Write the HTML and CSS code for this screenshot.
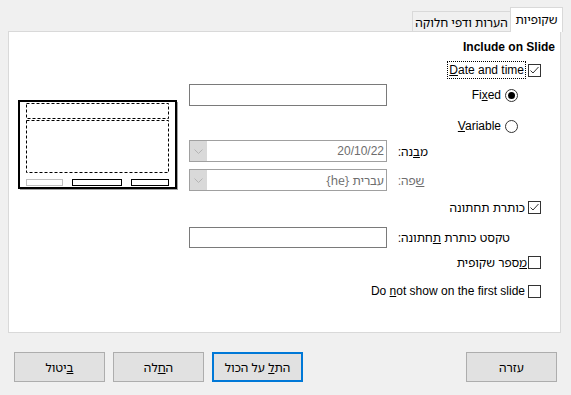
FILE: index.html
```html
<!DOCTYPE html>
<html lang="he">
<head>
    <meta charset="UTF-8">
    <title>Header and Footer</title>
    <link rel="stylesheet" href="styles.css">
</head>
<body>
    <div class="dialog">
        <div class="tabs">
            <div class="tab he" dir="rtl">הערות ודפי חלוקה</div>
            <div class="tab active he" dir="rtl">שקופיות</div>
        </div>

        <div class="panel">
            <div class="preview">
                <svg width="160" height="90" viewBox="0 0 160 90">
                    <rect x="2" y="2" width="158" height="88" fill="#a0a0a0"/>
                    <rect x="1" y="1" width="157" height="87" fill="#fff" stroke="#000" stroke-width="2"/>
                    <rect x="8.5" y="3.5" width="142" height="15" fill="none" stroke="#000" stroke-dasharray="3 2"/>
                    <rect x="8.5" y="20.5" width="142" height="52" fill="none" stroke="#000" stroke-dasharray="3 2"/>
                    <rect x="8.5" y="79.5" width="36" height="6" fill="none" stroke="#c0c0c0"/>
                    <rect x="54.5" y="79.5" width="49" height="6" fill="none" stroke="#000"/>
                    <rect x="113.5" y="79.5" width="37" height="6" fill="none" stroke="#000"/>
                </svg>
            </div>

            <div class="form">
                <div class="row r-include">
                    <div class="ctl"></div>
                    <div class="lbl end"><b>Include on Slide</b></div>
                </div>
                <div class="row r-date">
                    <div class="ctl"></div>
                    <div class="lbl check">
                        <span class="focus"><u>D</u>ate and time</span>
                        <span class="box checked"><svg width="11" height="11" viewBox="0 0 11 11"><path d="M1.5 5.5 L4 8 L9.5 2" fill="none" stroke="#333" stroke-width="1"/></svg></span>
                    </div>
                </div>
                <div class="row r-fixed">
                    <div class="ctl"><div class="input"></div></div>
                    <div class="lbl radio-row">
                        <span>Fi<u>x</u>ed</span>
                        <span class="radio on"></span>
                    </div>
                </div>
                <div class="row r-variable">
                    <div class="ctl"></div>
                    <div class="lbl radio-row">
                        <span><u>V</u>ariable</span>
                        <span class="radio"></span>
                    </div>
                </div>
                <div class="row r-combo1">
                    <div class="ctl">
                        <div class="combo">
                            <span class="drop"><svg width="9" height="5" viewBox="0 0 9 5"><path d="M0.5 0.5 L4.5 4.5 L8.5 0.5" fill="none" stroke="#b4b4b4"/></svg></span>
                            <span class="value">20/10/22</span>
                        </div>
                    </div>
                    <div class="lbl side"><span class="he" dir="rtl">מ<u>ב</u>נה:</span></div>
                </div>
                <div class="row r-combo2">
                    <div class="ctl">
                        <div class="combo">
                            <span class="drop"><svg width="9" height="5" viewBox="0 0 9 5"><path d="M0.5 0.5 L4.5 4.5 L8.5 0.5" fill="none" stroke="#b4b4b4"/></svg></span>
                            <span class="value he" dir="rtl">עברית {he}</span>
                        </div>
                    </div>
                    <div class="lbl side off"><span class="he" dir="rtl"><u>ש</u>פה:</span></div>
                </div>
                <div class="row r-footer">
                    <div class="ctl"></div>
                    <div class="lbl check">
                        <span class="he" dir="rtl">כותרת תחתונה</span>
                        <span class="box checked"><svg width="11" height="11" viewBox="0 0 11 11"><path d="M1.5 5.5 L4 8 L9.5 2" fill="none" stroke="#333" stroke-width="1"/></svg></span>
                    </div>
                </div>
                <div class="row r-ftext">
                    <div class="ctl"><div class="input"></div></div>
                    <div class="lbl side"><span class="he" dir="rtl">טקסט כותרת <u>ת</u>חתונה:</span></div>
                </div>
                <div class="row r-slide">
                    <div class="ctl"></div>
                    <div class="lbl check tight">
                        <span class="he" dir="rtl"><u>מ</u>ספר שקופית<u> </u></span>
                        <span class="box"></span>
                    </div>
                </div>
                <div class="row r-first">
                    <div class="ctl"></div>
                    <div class="lbl check">
                        <span>Do <u>n</u>ot show on the first slide</span>
                        <span class="box"></span>
                    </div>
                </div>
            </div>
        </div>

        <div class="buttons">
            <button class="btn he" dir="rtl"><u>ב</u>יטול</button>
            <button class="btn he" dir="rtl">ה<u>ח</u>לה</button>
            <button class="btn default he" dir="rtl">הת<u>ל</u> על הכול</button>
            <span class="spacer"></span>
            <button class="btn he" dir="rtl">עזרה</button>
        </div>
    </div>
</body>
</html>
```

FILE: styles.css
```css
body { margin: 0; background: #f0f0f0; font-family: "Liberation Sans", "DejaVu Sans", sans-serif; font-size: 12px; color: #000; }
.dialog { width: 571px; height: 395px; overflow: hidden; }
.he { font-family: "Noto Sans Hebrew", Roboto, monospace; }

/* tabs */
.tabs { display: flex; justify-content: flex-end; align-items: flex-end; height: 31px; padding-right: 8px; }
.tab { box-sizing: border-box; height: 20px; width: 98px; border: 1px solid #d9d9d9; border-right: none; border-bottom: none; background: #f0f0f0; text-align: center; line-height: 21px; white-space: nowrap; }
.tab.active { width: 53px; height: 25px; margin-bottom: -1px; background: #fff; border-right: 1px solid #d9d9d9; line-height: 24px; position: relative; z-index: 1; }

/* panel */
.panel { box-sizing: border-box; margin-left: 8px; width: 553px; height: 302px; border: 1px solid #d9d9d9; background: #fff; display: flex; }
.preview { margin: 68px 0 0 9px; width: 160px; height: 90px; }
.preview svg { display: block; }
.form { margin-left: 11px; width: 366px; display: flex; flex-direction: column; }

.row { display: flex; height: 18px; align-items: center; }
.ctl { width: 198px; flex: none; align-self: stretch; }
.lbl { flex: 1; min-width: 0; display: flex; align-items: center; height: 100%; white-space: nowrap; }
.lbl > span { flex: none; }
.end { justify-content: flex-end; }
.check { justify-content: flex-end; padding-right: 14px; gap: 3px; }
.check.tight { gap: 1px; }
.radio-row { justify-content: flex-end; padding-right: 37px; gap: 4px; }
.side { padding-left: 11px; }
.off { color: #6d6d6d; }

.r-include { margin-top: 6px; }
.r-date { margin-top: 5px; }
.r-fixed { margin-top: 5px; height: 22px; }
.r-variable { margin-top: 11px; }
.r-combo1 { margin-top: 5px; height: 22px; }
.r-combo2 { margin-top: 7px; height: 22px; }
.r-footer { margin-top: 7px; }
.r-ftext { margin-top: 11px; height: 21px; }
.r-slide { margin-top: 5px; }
.r-first { margin-top: 11px; }

.focus { outline: 1px dotted #000; outline-offset: 0; padding: 0 1px; line-height: 16px; }

.box { box-sizing: border-box; width: 13px; height: 13px; border: 1px solid #333; background: #fff; display: flex; }
.radio { box-sizing: border-box; width: 13px; height: 13px; border: 1px solid #333; border-radius: 50%; background: #fff; display: flex; align-items: center; justify-content: center; }
.radio.on::after { content: ""; width: 7px; height: 7px; border-radius: 50%; background: #000; }

.input { box-sizing: border-box; height: 100%; border: 1px solid #7a7a7a; background: #fff; }
.combo { box-sizing: border-box; height: 100%; border: 1px solid #a0a0a0; background: #fff; display: flex; align-items: center; }
.drop { width: 17px; height: 100%; background: #d9d9d9; display: flex; align-items: center; justify-content: center; flex: none; }
.value { flex: 1; text-align: right; padding-right: 2px; color: #6d6d6d; }

/* buttons */
.buttons { display: flex; gap: 8px; padding: 0 14px; margin-top: 19px; }
.spacer { flex: 1; }
.btn { box-sizing: border-box; width: 91px; height: 30px; border: 1px solid #adadad; background: #e1e1e1; font-size: 12px; color: #000; padding: 0; }
.btn.default { border: 2px solid #0078d7; }
```
